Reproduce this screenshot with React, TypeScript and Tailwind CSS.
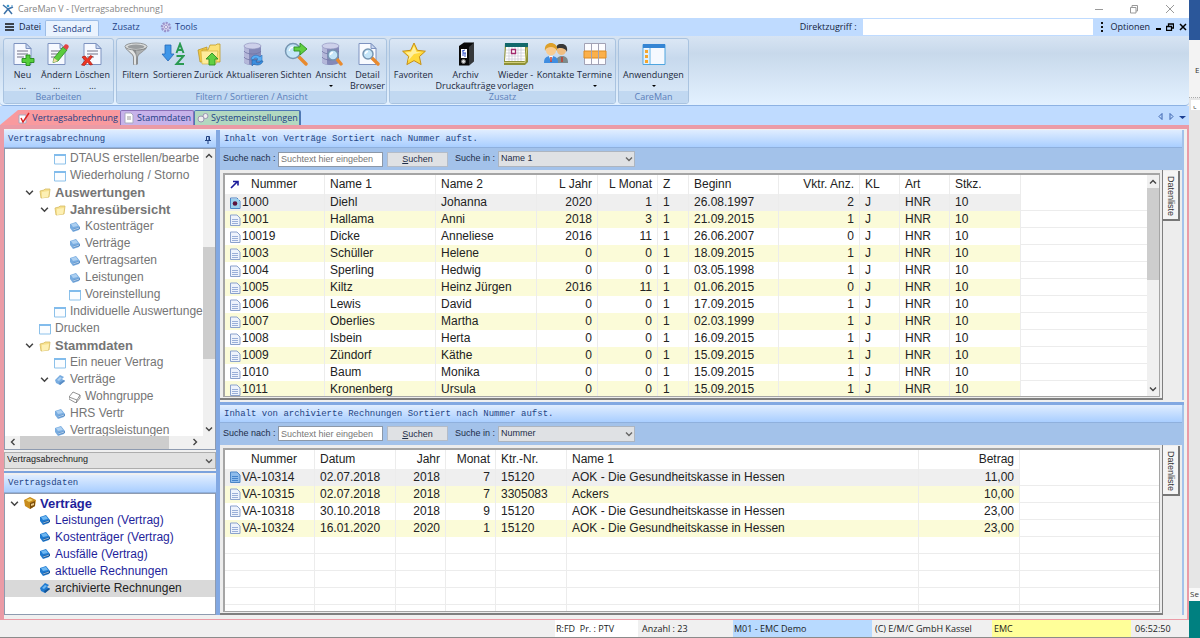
import type { ReactNode } from "react";

const uiFont = "font-['Open_Sans',sans-serif]";
const gridFont = "font-['Liberation_Sans',sans-serif]";

/* ---------- icons ---------- */

function Svg({ children, box = 24, className = "size-6" }: { children: ReactNode; box?: number; className?: string }) {
  return (
    <svg viewBox={`0 0 ${box} ${box}`} className={`${className} shrink-0`} fill="none" aria-hidden="true">
      {children}
    </svg>
  );
}

function Page() {
  return (
    <>
      <path d="M3 1.500h12l5 5v16h-17z" fill="#f6f9ff" stroke="#7e93c0" />
      <path d="M15 1.500v5h5z" fill="#c9d8f2" stroke="#7e93c0" />
      <path d="M6 9h11M6 12h11M6 15h7" stroke="#b4b5c2" strokeWidth="2" />
    </>
  );
}

function Drum() {
  return (
    <>
      <path d="M3 4v16c0 1.700 4 3 8.500 3s8.500-1.300 8.500-3v-16z" fill="#8489b8" />
      <path d="M3 4v16c0 1 1.500 1.900 5 2.500v-16z" fill="#b4b7d9" />
      <path d="M3 9c1 2 5 3 8.500 3s7.500-1 8.500-3M3 15c1 2 5 3 8.500 3s7.500-1 8.500-3" stroke="#7276a6" strokeWidth=".8" />
      <ellipse cx="11.500" cy="4" rx="8.500" ry="3" fill="#cdd0ea" stroke="#9396c0" strokeWidth=".7" />
    </>
  );
}

function Lens({ x, y, r }: { x: number; y: number; r: number }) {
  return (
    <>
      <path d={`M${x + r * 0.7} ${y + r * 0.7}L22 22`} stroke="#e88a2e" strokeWidth="3.400" strokeLinecap="round" />
      <circle cx={x} cy={y} r={r} fill="#c4e5f8" stroke="#7796b2" strokeWidth="1.500" />
      <path d={`M${x - r * 0.5} ${y}a${r * 0.5} ${r * 0.5} 0 0 1 ${r * 0.5} ${-r * 0.5}`} stroke="#fff" strokeWidth="1.300" />
    </>
  );
}

const icons: Record<string, ReactNode> = {
  new: (
    <Svg>
      <Page />
      <path d="M15 13h4v3.500h4v4h-4v3h-4v-3h-4v-4h4z" fill="#55cf3b" stroke="#258a1c" strokeWidth=".9" />
    </Svg>
  ),
  edit: (
    <Svg>
      <Page />
      <path d="M9 16l9-11 4 3-9 11-5 1.500z" fill="#5bcc3e" stroke="#2c8a1e" strokeWidth=".8" />
      <path d="M18 5l2-2.500c2-1 4.500 1 3.500 3l-1.500 2.500z" fill="#e34444" />
      <path d="M9 16l4 3-5 1.500z" fill="#f3d9a4" />
    </Svg>
  ),
  remove: (
    <Svg>
      <Page />
      <path d="M1 15l3-1 2.500 3 3-3.500 2 1-3 4 3 4-2.500.500-2.500-3-3 3.500-3-.500 3.500-4.500z" fill="#ee3524" stroke="#a81a10" strokeWidth=".7" />
    </Svg>
  ),
  filter: (
    <Svg>
      <path d="M1 5c1 4 7 6 8 10v7.500c1.500 1 4 .5 5-.5v-7c1-4 8-6 9-10z" fill="#8b8e90" />
      <path d="M2 6c2 3 7 5 8 9v7.500c1 .4 1.500.4 2 .2v-8c0-4-3-5-4-8z" fill="#e2e4e4" />
      <path d="M12 8c2 1 7 0 9-1-2 3-7 4-8 8v3z" fill="#aeb1b2" />
      <ellipse cx="12" cy="4.500" rx="11" ry="3.500" fill="#dcdede" stroke="#7d8081" strokeWidth=".8" />
      <ellipse cx="12" cy="4.800" rx="8.500" ry="2.200" fill="#9a9d9f" />
    </Svg>
  ),
  sort: (
    <Svg>
      <path d="M4 3h6v9h3l-6 7-6-7h3z" fill="#3f96e8" stroke="#2467b8" strokeWidth=".8" />
      <path d="M15.500 11l3.500-9 3.500 9M16.500 8h5" stroke="#2b9a52" strokeWidth="2" />
      <path d="M15.500 14h7l-7 8h7.500" stroke="#2b9a52" strokeWidth="2" />
    </Svg>
  ),
  back: (
    <Svg>
      <path d="M1 8l9-3v15h-7z" fill="#f0c945" stroke="#b98f1d" strokeWidth=".7" />
      <path d="M5 8h6l2-5h6l1-1h3v18h-16z" fill="#fbe17a" stroke="#c29c29" strokeWidth=".8" />
      <path d="M4 9h17l-2 13h-14z" fill="#fdec9b" stroke="#d2ac37" strokeWidth=".6" />
      <path d="M15 11l6 6h-3v6h-6v-6h-3z" fill="#60cf42" stroke="#2c8f22" strokeWidth=".9" />
    </Svg>
  ),
  refresh: (
    <Svg>
      <Drum />
      <path d="M10 17c1-4 6-5 9-2l2-2v6h-6l2-2c-2-2-4-1-5 1z" fill="#5aaef5" stroke="#2872bd" strokeWidth=".6" />
      <path d="M22 19c-1 4-6 5-9 3l-2 2v-6h5l-1 2c2 1 4 1 5-1z" fill="#3b8fe0" stroke="#2463a6" strokeWidth=".6" />
    </Svg>
  ),
  views: (
    <Svg>
      <Lens x={9} y={9} r={7.5} />
      <path d="M10 5h6v-4l7 6-7 6v-4h-6z" fill="#60cf42" stroke="#2c8f22" strokeWidth=".9" />
    </Svg>
  ),
  view: (
    <Svg>
      <Drum />
      <Lens x={14} y={13} r={5} />
    </Svg>
  ),
  detail: (
    <Svg>
      <path d="M3 1.500h12l5 5v16h-17z" fill="#f9fbff" stroke="#7e93c0" />
      <path d="M15 1.500v5h5z" fill="#c9d8f2" stroke="#7e93c0" />
      <Lens x={12} y={12} r={5} />
    </Svg>
  ),
  star: (
    <Svg>
      <path d="M12 1l3.400 7.300 8 .9-6 5.400 1.700 8-7.100-4-7.100 4 1.700-8-6-5.400 8-.9z" fill="#ffd93b" stroke="#c58f16" strokeLinejoin="round" />
      <path d="M12 4l2.500 6 5 .5-7.500 1.500-6 7 1.500-5-4-3.500 5.500-.6z" fill="#fff0a0" />
    </Svg>
  ),
  binder: (
    <Svg>
      <path d="M5 4l5-3.500h10l-1 19-4 4h-10z" fill="#090909" />
      <path d="M15 5l5-4.500v19l-5 4z" fill="#35383b" />
      <path d="M7 7h6v9h-6z" fill="#fff" />
      <path d="M8 9l3-1M9 9v5M9 11h3M11 11v4" stroke="#3454c8" />
      <circle cx="9.500" cy="19.500" r="2" fill="#ddd" stroke="#777" />
    </Svg>
  ),
  calendar: (
    <Svg>
      <path d="M1 1h23v19l-3 3h-21v-4z" fill="#8e9138" />
      <path d="M1 1h23v4h-23z" fill="#11686b" />
      <path d="M2 5h19v14h-20z" fill="#fff" />
      <path d="M2 8h19M2 11h19M2 14h19M2 17h19M5 5v14M8 5v14M11 5v14M14 5v14M17 5v14" stroke="#c6c7d4" strokeWidth=".7" />
      <path d="M7.500 7.500h4v4h-4z" fill="#fff" stroke="#a22a6c" strokeWidth="1.300" />
      <path d="M0 20.500h21l2-15" stroke="#d3cf7c" />
    </Svg>
  ),
  contacts: (
    <Svg>
      <path d="M12 21c0-5 2-7 6-7s6 2 6 7z" fill="#7d8b8c" />
      <circle cx="17.500" cy="8.500" r="4.500" fill="#efbd81" />
      <path d="M12 8c0-6 3-6 6-6s6 2 5 8c-1-3-4-4-6-4s-4 0-5 2z" fill="#383838" />
      <path d="M0 21c0-5 2-7 7-7s7 2 7 7z" fill="#3f8de0" />
      <path d="M5 14l2 6 2-6z" fill="#fff" />
      <circle cx="7" cy="8.500" r="5" fill="#f8cb90" />
      <path d="M1 9c-1-6 3-8 6-8s7 2 6 8c-2-3-3-4-6-4s-5 1-6 4z" fill="#dda02a" />
      <path d="M7 15v5M18 15v5" stroke="#c83a2a" strokeWidth="1.500" />
    </Svg>
  ),
  schedule: (
    <Svg>
      <path d="M1.500 1.500h21v21h-21z" fill="#fcfcff" stroke="#a2a2b5" />
      <path d="M1 9h22v7h-22z" fill="#fbb04a" stroke="#dc8b23" />
      <path d="M8.500 1v22M15.500 1v22" stroke="#a2a2b5" />
    </Svg>
  ),
  apps: (
    <Svg>
      <path d="M1 2.500h22v20h-22z" fill="#f5f9ff" stroke="#4fa5df" />
      <path d="M1 2h22v4h-22z" fill="#3585d4" />
      <path d="M2 7h5v15h-5z" fill="#dff0fc" />
      <path d="M3 8h3v3h-3zM3 13h3v3h-3zM3 18h3v3h-3z" fill="#f5a52c" />
      <path d="M8 6v16" stroke="#5db2e8" />
    </Svg>
  ),
};

function TreeIcon({ kind }: { kind: string }) {
  if (kind === "folder")
    return (
      <Svg box={12} className="size-3">
        <path d="M1 4l4-1 1-1h5l-1 8-8 1z" fill="#f7e08d" stroke="#d6bb62" strokeWidth=".8" />
        <path d="M3 5l7-1-1 6-6 1z" fill="#fdf0b4" />
      </Svg>
    );
  if (kind === "form")
    return (
      <Svg box={12} className="size-3">
        <path d="M.5 1.500h11v9.500h-11z" fill="#fbfdff" stroke="#8cc1ea" />
        <path d="M0 1h12v2h-12z" fill="#82bcec" />
      </Svg>
    );
  if (kind === "wire")
    return (
      <Svg box={12} className="size-3">
        <path d="M0 6l4-5 7 3-3 5zM0 6v2l7 4 4-5v-3M8 9l-1 3" stroke="#777" strokeWidth=".8" fill="#fff" />
      </Svg>
    );
  if (kind === "gold")
    return (
      <Svg box={12} className="size-3">
        <path d="M0 3l6-3 6 3-1 6-5 3-5-3z" fill="#c98d1c" />
        <path d="M2 3l4-1.500 3 1.500-4 2z" fill="#f4d46a" />
        <path d="M6 6l5-2v5l-5 3z" fill="#7c4e0b" />
        <path d="M7 7l3-1v2l-3 1z" fill="#e9c98a" />
      </Svg>
    );
  const strong = kind === "bookDark" || kind === "openDark";
  const main = strong ? "#1f7ad0" : "#78ace0";
  const dark = strong ? "#155393" : "#5a8dc4";
  const light = strong ? "#6fb8f2" : "#add0f1";
  if (kind === "open" || kind === "openDark")
    return (
      <Svg box={12} className="size-3">
        <path d="M1 6l5-5 4 2-2 2 3 2-5 4-4-2z" fill={main} />
        <path d="M3 6l3-3 2 1-3 3z" fill={light} />
        <path d="M5 9l5-3 1 1-5 4z" fill={dark} />
      </Svg>
    );
  return (
    <Svg box={12} className="size-3">
      <path d="M1 3l6-2 4 5-1 3-6 2-3-4z" fill={main} />
      <path d="M2 3l5-1 2 3-5 1z" fill={light} />
      <path d="M4 8l7-2v2l-7 2z" fill={dark} />
      <path d="M4 9l6-2" stroke="#e8f3fd" strokeWidth=".6" />
    </Svg>
  );
}

function Chevron({ turn = "", className = "size-2" }: { turn?: string; className?: string }) {
  return (
    <svg viewBox="0 0 8 8" className={`${className} ${turn} shrink-0`} fill="none" aria-hidden="true">
      <path d="M1 2.500l3 3 3-3" stroke="currentColor" strokeWidth="1.400" />
    </svg>
  );
}

function RowIcon({ kind }: { kind: string }) {
  return (
    <Svg box={12} className="size-3">
      <path d="M1.500 1h6.500l3 3v7.500h-9.500z" fill={kind === "blue" ? "#8ebcec" : "#eef3fc"} stroke={kind === "plain" ? "#8ba2cc" : "#4c86c6"} />
      {kind === "mark" ? (
        <>
          <path d="M2 2h8v9h-8z" fill="#9cd0ee" />
          <circle cx="6" cy="6.500" r="2.300" fill="#5c123c" />
        </>
      ) : (
        <path d="M3 5.500h6M3 7.500h6M3 9.500h6" stroke={kind === "blue" ? "#4584cc" : "#9aafd8"} />
      )}
    </Svg>
  );
}

/* ---------- ribbon ---------- */

type Tool = { icon: string; label: string; line2?: string; arrow?: boolean; width: string };

const groups: { title: string; width: string; tools: Tool[] }[] = [
  {
    title: "Bearbeiten",
    width: "w-[111px]",
    tools: [
      { icon: "new", label: "Neu", line2: "...", width: "w-[34px]" },
      { icon: "edit", label: "Ändern", line2: "...", width: "w-[34px]" },
      { icon: "remove", label: "Löschen", line2: "...", width: "w-[38px]" },
    ],
  },
  {
    title: "Filtern / Sortieren / Ansicht",
    width: "w-[271px]",
    tools: [
      { icon: "filter", label: "Filtern", width: "w-[34px]" },
      { icon: "sort", label: "Sortieren", width: "w-[40px]" },
      { icon: "back", label: "Zurück", width: "w-[32px]" },
      { icon: "refresh", label: "Aktualiseren", width: "w-[56px]" },
      { icon: "views", label: "Sichten", width: "w-[31px]" },
      { icon: "view", label: "Ansicht", arrow: true, width: "w-[39px]" },
      { icon: "detail", label: "Detail", line2: "Browser", width: "w-[34px]" },
    ],
  },
  {
    title: "Zusatz",
    width: "w-[227px]",
    tools: [
      { icon: "star", label: "Favoriten", width: "w-[44px]" },
      { icon: "binder", label: "Archiv", line2: "Druckaufträge", width: "w-[60px]" },
      { icon: "calendar", label: "Wieder -", line2: "vorlagen", width: "w-[40px]" },
      { icon: "contacts", label: "Kontakte", width: "w-[40px]" },
      { icon: "schedule", label: "Termine", arrow: true, width: "w-[38px]" },
    ],
  },
  {
    title: "CareMan",
    width: "w-[71px]",
    tools: [{ icon: "apps", label: "Anwendungen", arrow: true, width: "w-[67px]" }],
  },
];

function Ribbon() {
  return (
    <div className="flex h-[70px] shrink-0 gap-[2px] rounded-b border-b border-[#8db2e3] bg-linear-to-b from-[#d7e4f3] via-[#c8d9eb] via-25% to-[#e3f1ff] px-[3px] pt-[2px] pb-px">
      {groups.map((group) => (
        <section key={group.title} className={`${group.width} flex flex-col justify-between overflow-hidden rounded-[3px] border border-[#a9c3e0] bg-linear-to-b from-[#dbe7f5] via-[#c7d9ed] via-30% to-[#dcebfa]`}>
          <div className="flex h-[52px] justify-center pt-[3px]">
            {group.tools.map((tool) => (
              <button key={tool.label} type="button" className={`${tool.width} flex shrink-0 flex-col items-center whitespace-nowrap`}>
                {icons[tool.icon]}
                <span className="mt-[3px] text-[9px] leading-[11px] text-[#1c2a40]">{tool.label}</span>
                {tool.line2 && <span className="text-[9px] leading-[11px] text-[#1c2a40]">{tool.line2}</span>}
                {tool.arrow && <span className="mt-[5px] border-x-2 border-t-2 border-x-transparent border-t-black" />}
              </button>
            ))}
          </div>
          <h2 className="bg-[#c1d8f1] text-center text-[9px] leading-3 text-[#5b7fba]">{group.title}</h2>
        </section>
      ))}
    </div>
  );
}

function TitleBar() {
  return (
    <header className="flex h-[18px] shrink-0 items-center bg-white text-[#858585]">
      <Svg box={12} className="mx-[2px] size-3">
        <path d="M1 2l5 4-4 5M6 6l5-2M6 6l4 5" stroke="#3d72a8" strokeWidth="1.500" />
        <circle cx="6" cy="3" r="1.300" fill="#3d9bd0" />
        <circle cx="10" cy="3" r="1" fill="#8bb8dc" />
      </Svg>
      <h1 className="ml-[2px] text-[9px]">CareMan V - [Vertragsabrechnung]</h1>
      <div className="ml-auto flex items-center gap-[26px] pr-[14px]">
        <button type="button" aria-label="Minimieren" className="h-px w-[8px] bg-[#999]" />
        <button type="button" aria-label="Verkleinern">
          <Svg box={10} className="size-[10px]">
            <path d="M1.500 3.500h5.500v5.500h-5.500zM3 3v-1.500h5.500v5.500h-1.500" stroke="#999" />
          </Svg>
        </button>
        <button type="button" aria-label="Schließen">
          <Svg box={10} className="size-[10px]">
            <path d="M1 1l8 8M9 1l-8 8" stroke="#999" />
          </Svg>
        </button>
      </div>
    </header>
  );
}

function MenuBar() {
  return (
    <nav className="flex h-[18px] shrink-0 items-center bg-[#bfdbff] text-[9px] text-[#1c3f86]">
      <button type="button" className="flex w-[45px] items-center gap-[4px] pl-[5px] text-[#15233c]">
        <Svg box={10} className="size-[10px]">
          <path d="M0 2h9M0 5h9M0 8h9" stroke="#111" strokeWidth="1.500" />
        </Svg>
        Datei
      </button>
      <button type="button" className="mt-[2px] h-4 w-[54px] rounded-t-[2px] border border-b-0 border-[#9dbde6] bg-[#eaf3fe]">Standard</button>
      <button type="button" className="ml-[8px] w-[38px]">Zusatz</button>
      <button type="button" className="ml-[15px] flex items-center gap-[3px]">
        <Svg box={12} className="size-3">
          <circle cx="6" cy="6" r="4" fill="#d8d5ee" stroke="#9a94cc" strokeWidth="2.500" strokeDasharray="2 1" />
          <circle cx="6" cy="6" r="1.500" fill="#fff" stroke="#9a94cc" />
        </Svg>
        Tools
      </button>
      <label htmlFor="direct" className="ml-auto text-[#15233c]">Direktzugriff :</label>
      <input id="direct" className="ml-[6px] h-4 w-[230px] bg-white px-1 outline-none" />
      <button type="button" className="ml-[7px] flex items-center gap-[7px] text-[#15233c]">
        <Svg box={10} className="size-[10px] -mx-[3px]">
          <path d="M4 0h2v2h-2zM4 4h2v2h-2zM4 8h2v2h-2z" fill="#111" />
        </Svg>
        Optionen
      </button>
      <div className="mr-[2px] ml-[6px] flex items-center gap-[5px]">
        <button type="button" aria-label="Fenster minimieren" className="mt-[4px] h-[2px] w-[5px] bg-black" />
        <button type="button" aria-label="Fenster wiederherstellen">
          <Svg box={8} className="size-2">
            <path d="M.5 3.500h5v4h-5zM2.500 3v-2h5v4h-2" stroke="#000" strokeWidth="1.300" />
          </Svg>
        </button>
        <button type="button" aria-label="Fenster schließen">
          <Svg box={8} className="size-2">
            <path d="M1 1l6 6M7 1l-6 6" stroke="#000" strokeWidth="1.500" />
          </Svg>
        </button>
      </div>
    </nav>
  );
}

function DocumentTabs() {
  return (
    <div className="flex h-[19px] shrink-0 items-end bg-[#bfdbff] text-[9px] text-[#1c3f86]">
      <button type="button" className="flex h-[15px] w-[120px] items-center justify-end gap-[2px] bg-[#f99a9e] pr-[2px] whitespace-nowrap [clip-path:polygon(18px_0,100%_0,100%_100%,0_100%)]">
        <Svg box={12} className="size-3">
          <path d="M1 3h7v8h-7z" fill="#fff" stroke="#a9a9c0" />
          <path d="M3 6l2 4 6-9" stroke="#d92525" strokeWidth="1.500" />
        </Svg>
        Vertragsabrechnung
      </button>
      <button type="button" className="flex h-[15px] w-[74px] items-center gap-[2px] rounded-t-[2px] border border-b-0 border-[#8a70b8] bg-[#c6b2ea] pl-[2px]">
        <Svg box={12} className="size-3">
          <path d="M2 1h6l2 2v8h-8z" fill="#fff" stroke="#a9a9c0" />
          <path d="M4 5h4M4 7h4" stroke="#999" />
        </Svg>
        Stammdaten
      </button>
      <button type="button" className="flex h-[15px] w-[107px] items-center gap-[2px] rounded-t-[2px] border border-r-2 border-b-0 border-[#4e78b4] bg-[#b2d8c0] pl-[2px] whitespace-nowrap">
        <Svg box={12} className="size-3">
          <circle cx="4" cy="7" r="3" fill="#eee" stroke="#9a94b4" />
          <circle cx="8.500" cy="4" r="2.500" fill="#eee" stroke="#9a94b4" />
        </Svg>
        Systemeinstellungen
      </button>
      <div className="mb-[5px] ml-auto flex items-center gap-[4px] pr-[3px]">
        <button type="button" aria-label="Vorheriger Reiter">
          <Svg box={7} className="size-[7px]"><path d="M5 .5v6l-3-3z" stroke="#3a62ae" /></Svg>
        </button>
        <button type="button" aria-label="Nächster Reiter">
          <Svg box={7} className="size-[7px]"><path d="M2 .5v6l3-3z" stroke="#3a62ae" /></Svg>
        </button>
        <button type="button" aria-label="Alle Reiter">
          <Svg box={7} className="size-[7px]"><path d="M0 3h7l-3.500 3z" fill="#1b3f94" /></Svg>
        </button>
      </div>
    </div>
  );
}

/* ---------- left side ---------- */

type Node = { label: string; icon: string; level: number; open?: boolean; bold?: boolean; selected?: boolean };

const menuTree: Node[] = [
  { label: "DTAUS erstellen/bearbe", icon: "form", level: 3 },
  { label: "Wiederholung / Storno", icon: "form", level: 3 },
  { label: "Auswertungen", icon: "folder", level: 2, open: true, bold: true },
  { label: "Jahresübersicht", icon: "folder", level: 3, open: true, bold: true },
  { label: "Kostenträger", icon: "book", level: 4 },
  { label: "Verträge", icon: "book", level: 4 },
  { label: "Vertragsarten", icon: "book", level: 4 },
  { label: "Leistungen", icon: "book", level: 4 },
  { label: "Voreinstellung", icon: "form", level: 4 },
  { label: "Individuelle Auswertunge", icon: "form", level: 3 },
  { label: "Drucken", icon: "form", level: 2 },
  { label: "Stammdaten", icon: "folder", level: 2, open: true, bold: true },
  { label: "Ein neuer Vertrag", icon: "form", level: 3 },
  { label: "Verträge", icon: "open", level: 3, open: true },
  { label: "Wohngruppe", icon: "wire", level: 4 },
  { label: "HRS Vertr", icon: "book", level: 3 },
  { label: "Vertragsleistungen", icon: "book", level: 3 },
];

const dataTree: Node[] = [
  { label: "Verträge", icon: "gold", level: 1, open: true, bold: true },
  { label: "Leistungen (Vertrag)", icon: "bookDark", level: 2 },
  { label: "Kostenträger (Vertrag)", icon: "bookDark", level: 2 },
  { label: "Ausfälle (Vertrag)", icon: "bookDark", level: 2 },
  { label: "aktuelle Rechnungen", icon: "bookDark", level: 2 },
  { label: "archivierte Rechnungen", icon: "openDark", level: 2, selected: true },
];

const indents = ["", "pl-[4px]", "pl-[19px]", "pl-[34px]", "pl-[49px]"];

function Tree({ nodes, color }: { nodes: Node[]; color: string }) {
  return (
    <ul className={`${gridFont} ${color} min-w-0 flex-1 overflow-hidden pt-px text-[12px]`}>
      {nodes.map((node, i) => (
        <li key={i} className={node.selected ? "bg-[#d9d9d9] text-[#222]" : ""}>
          <button type="button" className={`${indents[node.level]} flex h-[17px] items-center whitespace-nowrap`}>
            <span className="w-[15px] text-[#444]">{node.open && <Chevron className="ml-[1px] size-[9px]" />}</span>
            <TreeIcon kind={node.icon} />
            <span className={`${node.bold ? "text-[13px] font-bold" : ""} ml-[4px] leading-[17px]`}>{node.label}</span>
          </button>
        </li>
      ))}
    </ul>
  );
}

function PaneHeader({ title, pin }: { title: string; pin?: boolean }) {
  return (
    <div className="flex h-[18px] shrink-0 items-center justify-between border-b border-[#8fb0dd] bg-linear-to-b from-[#e0edff] to-[#a9ceff] px-[4px] pt-[2px] font-['Liberation_Mono',monospace] text-[9px] text-[#1f4585]">
      <h2>{title}</h2>
      {pin && (
        <button type="button" aria-label="Anheften">
          <Svg box={8} className="size-2">
            <path d="M2.500 0.500h3v4h-3zM1 4.500h6M4 5v3M5 1v3" stroke="#1f3f80" />
          </Svg>
        </button>
      )}
    </div>
  );
}

function Sidebar() {
  return (
    <aside className="flex w-[212px] shrink-0 flex-col">
      <section className="flex min-h-0 flex-[340] flex-col">
        <PaneHeader title="Vertragsabrechnung" pin />
        <div className="flex min-h-0 flex-1 flex-col border border-[#8e9bb0] bg-white">
          <div className="flex min-h-0 flex-1">
            <Tree nodes={menuTree} color="text-[#757575]" />
            <div className="flex w-[12px] flex-col items-center justify-between bg-[#f0f0f0] py-[3px] text-[#444]">
              <Chevron turn="rotate-180" />
              <div className="mt-[87px] h-[112px] w-full bg-[#cdcdcd]" />
              <Chevron className="mt-auto size-2" />
            </div>
          </div>
          <div className="flex h-[13px] shrink-0 items-center bg-[#f0f0f0] px-[4px] text-[#444]">
            <Chevron turn="rotate-90" />
            <div className="ml-[3px] h-full w-[149px] bg-[#cdcdcd]" />
            <Chevron turn="-rotate-90" className="mr-[12px] ml-auto size-2" />
          </div>
        </div>
        <div className="relative mt-[2px] h-[17px] shrink-0">
          <select aria-label="Bereich" className={`${gridFont} block h-full w-full appearance-none border border-[#adadad] bg-[#e1e1e1] pl-[2px] text-[9px] text-[#222]`}>
            <option>Vertragsabrechnung</option>
          </select>
          <Chevron className="pointer-events-none absolute top-[5px] right-[3px] size-2 text-[#555]" />
        </div>
      </section>
      <div className="my-[2px] h-[2px] shrink-0 bg-[#7ba2dd]" />
      <section className="flex min-h-0 flex-[141] flex-col">
        <PaneHeader title="Vertragsdaten" />
        <div className="flex min-h-0 flex-1 border border-[#8e9bb0] bg-white">
          <Tree nodes={dataTree} color="text-[#1f1f9c]" />
        </div>
      </section>
    </aside>
  );
}

/* ---------- lists ---------- */

type Column = { title: string; width: string; right?: boolean };

const contractColumns: Column[] = [
  { title: "Nummer", width: "w-[100px]" },
  { title: "Name 1", width: "w-[111px]" },
  { title: "Name 2", width: "w-[101px]" },
  { title: "L Jahr", width: "w-[61px]", right: true },
  { title: "L Monat", width: "w-[60px]", right: true },
  { title: "Z", width: "w-[31px]" },
  { title: "Beginn", width: "w-[90px]" },
  { title: "Vktr. Anz.", width: "w-[81px]", right: true },
  { title: "KL", width: "w-[40px]" },
  { title: "Art", width: "w-[50px]" },
  { title: "Stkz.", width: "w-[71px]" },
];

const contracts = [
  ["1000", "Diehl", "Johanna", "2020", "1", "1", "26.08.1997", "2", "J", "HNR", "10"],
  ["1001", "Hallama", "Anni", "2018", "3", "1", "21.09.2015", "1", "J", "HNR", "10"],
  ["10019", "Dicke", "Anneliese", "2016", "11", "1", "26.06.2007", "0", "J", "HNR", "10"],
  ["1003", "Schüller", "Helene", "0", "0", "1", "18.09.2015", "1", "J", "HNR", "10"],
  ["1004", "Sperling", "Hedwig", "0", "0", "1", "03.05.1998", "1", "J", "HNR", "10"],
  ["1005", "Kiltz", "Heinz Jürgen", "2016", "11", "1", "01.06.2015", "0", "J", "HNR", "10"],
  ["1006", "Lewis", "David", "0", "0", "1", "17.09.2015", "1", "J", "HNR", "10"],
  ["1007", "Oberlies", "Martha", "0", "0", "1", "02.03.1999", "1", "J", "HNR", "10"],
  ["1008", "Isbein", "Herta", "0", "0", "1", "16.09.2015", "1", "J", "HNR", "10"],
  ["1009", "Zündorf", "Käthe", "0", "0", "1", "15.09.2015", "1", "J", "HNR", "10"],
  ["1010", "Baum", "Monika", "0", "0", "1", "15.09.2015", "1", "J", "HNR", "10"],
  ["1011", "Kronenberg", "Ursula", "0", "0", "1", "15.09.2015", "1", "J", "HNR", "10"],
];

const invoiceColumns: Column[] = [
  { title: "Nummer", width: "w-[90px]" },
  { title: "Datum", width: "w-[81px]" },
  { title: "Jahr", width: "w-[50px]", right: true },
  { title: "Monat", width: "w-[50px]", right: true },
  { title: "Ktr.-Nr.", width: "w-[71px]" },
  { title: "Name 1", width: "w-[352px]" },
  { title: "Betrag", width: "w-[101px]", right: true },
];

const invoices = [
  ["VA-10314", "02.07.2018", "2018", "7", "15120", "AOK - Die Gesundheitskasse in Hessen", "11,00"],
  ["VA-10315", "02.07.2018", "2018", "7", "3305083", "Ackers", "10,00"],
  ["VA-10318", "30.10.2018", "2018", "9", "15120", "AOK - Die Gesundheitskasse in Hessen", "23,00"],
  ["VA-10324", "16.01.2020", "2020", "1", "15120", "AOK - Die Gesundheitskasse in Hessen", "23,00"],
];

function DataTable({ columns, rows, blanks = 0, firstIcon, sortMark }: { columns: Column[]; rows: string[][]; blanks?: number; firstIcon: string; sortMark?: boolean }) {
  const line = "border-r border-[#ececec]";
  return (
    <table className={`${gridFont} w-full table-fixed border-separate border-spacing-0 text-[12px] text-[#222]`}>
      <thead>
        <tr className="h-[19px]">
          {columns.map((col, i) => (
            <th key={col.title} className={`${col.width} ${line} ${col.right ? "text-right" : "text-left"} px-[5px] py-0 leading-[19px] font-normal whitespace-nowrap`}>
              {i === 0 ? (
                <span className="flex items-center">
                  <span className="w-[21px]">
                    {sortMark && (
                      <Svg box={9} className="size-[9px]">
                        <path d="M1 8l6-6M3 1.500h5v4" stroke="#1b1b9a" strokeWidth="1.600" />
                      </Svg>
                    )}
                  </span>
                  {col.title}
                </span>
              ) : (
                col.title
              )}
            </th>
          ))}
          <th className="p-0" />
        </tr>
      </thead>
      <tbody>
        {rows.map((row, r) => {
          const fill = r === 0 ? "bg-[#efefef]" : r % 2 ? "bg-[#fbfbd8]" : "bg-white";
          return (
            <tr key={row[0]} className="h-[17px]">
              {row.map((cell, i) => (
                <td key={i} className={`${fill} ${line} ${columns[i].right ? "text-right" : ""} ${i === 0 ? "px-[4px]" : "px-[5px]"} py-0 leading-[17px] whitespace-nowrap`}>
                  {i === 0 ? (
                    <span className="flex items-center gap-[1px]">
                      <RowIcon kind={r === 0 ? firstIcon : "plain"} />
                      {cell}
                    </span>
                  ) : (
                    cell
                  )}
                </td>
              ))}
              <td className="border-b border-[#ececec] p-0" />
            </tr>
          );
        })}
        {Array.from({ length: blanks }, (_, r) => (
          <tr key={r} className="h-[17px]">
            {columns.map((col) => (
              <td key={col.title} className={`${line} border-b p-0`} />
            ))}
            <td className="border-b border-[#ececec] p-0" />
          </tr>
        ))}
      </tbody>
    </table>
  );
}

function SearchBar({ id, field }: { id: string; field: string }) {
  return (
    <form className={`${gridFont} flex h-[22px] shrink-0 items-center bg-[#a3c2ea] pl-[3px] text-[9px] text-[#1d2c48]`} onSubmit={(e) => e.preventDefault()}>
      <label htmlFor={`${id}-text`} className="w-[55px] whitespace-nowrap">Suche nach :</label>
      <input id={`${id}-text`} placeholder="Suchtext hier eingeben" className="h-[15px] w-[105px] border border-[#8c98a8] bg-white px-[2px] outline-none placeholder:text-[#777]" />
      <button type="submit" className="ml-[4px] h-[15px] w-[61px] border border-[#b4bcc8] bg-[#dfe1e4] leading-3">
        <span className="underline">S</span>uchen
      </button>
      <label htmlFor={`${id}-field`} className="ml-[7px] w-[43px] whitespace-nowrap">Suche in :</label>
      <span className="relative h-4 w-[137px]">
        <select id={`${id}-field`} className="block h-full w-full appearance-none border border-[#adb5c0] bg-[#dfe1e4] pl-[2px]">
          <option>{field}</option>
        </select>
        <Chevron className="pointer-events-none absolute top-[4px] right-[2px] size-2 text-[#666]" />
      </span>
    </form>
  );
}

function ListPane({ id, title, field, grow, scroll, children }: { id: string; title: string; field: string; grow: string; scroll?: boolean; children: ReactNode }) {
  return (
    <section className={`${grow} flex min-h-0 flex-col border-r-2 border-[#a3c2ea]`}>
      <PaneHeader title={title} />
      <SearchBar id={id} field={field} />
      <div className="flex min-h-0 flex-1 bg-[#ededed]">
        <div className="flex min-w-0 flex-1 border-r border-b-2 border-[#7f7f7f] pt-[3px] pr-[2px] pb-px pl-[3px]">
          <div className="flex min-w-0 flex-1 border-2 border-r border-b border-[#a5a5a5] bg-white">
            <div className="min-w-0 flex-1 overflow-hidden">{children}</div>
            {scroll && (
              <div className="flex w-[12px] flex-col items-center justify-between bg-[#f0f0f0] py-[3px] text-[#444]">
                <Chevron turn="rotate-180" />
                <div className="mt-[2px] h-[92px] w-full bg-[#cdcdcd]" />
                <Chevron className="mt-auto size-2" />
              </div>
            )}
          </div>
        </div>
        <div className="w-[19px] shrink-0 pt-px pr-[2px]">
          <button type="button" className={`${gridFont} h-[50px] w-full border-r-2 border-b-2 border-[#777] bg-[#f5f5f5] pt-[3px] text-[9px] leading-3 text-[#333] [writing-mode:vertical-rl]`}>Datenliste</button>
        </div>
      </div>
    </section>
  );
}

function StatusBar() {
  return (
    <footer className="flex h-[18px] shrink-0 justify-end border-b border-[#8b8b8b] bg-[#f0f0f0] text-[9px] leading-[17px] whitespace-pre text-[#1c1c1c]">
      <span className="w-[83px] bg-white pl-[1px]">R:FD  Pr. : PTV</span>
      <span className="w-[95px] pl-[4px]">Anzahl : 23</span>
      <span className="w-[139px] bg-[#b8daff] pl-[1px]">M01 - EMC Demo</span>
      <span className="w-[120px] pl-[3px]">(C) E/M/C GmbH Kassel</span>
      <span className="w-[139px] bg-[#ffff99] pl-[2px]">EMC</span>
      <span className="w-[58px] pl-[4px]">06:52:50</span>
    </footer>
  );
}

export default function App() {
  return (
    <div className={`${uiFont} flex h-screen overflow-hidden bg-[#f0f0f0]`}>
      <main className="flex min-w-0 flex-1 flex-col">
        <TitleBar />
        <MenuBar />
        <Ribbon />
        <DocumentTabs />
        <div className="flex min-h-0 flex-1 border-t-4 border-r-2 border-b border-l-4 border-[#eb9ba6] pt-px pr-[3px] pb-[4px]">
          <Sidebar />
          <div className="w-[4px] shrink-0 bg-[#82a8e2]" />
          <div className="flex min-w-0 flex-1 flex-col">
            <ListPane id="contracts" title="Inhalt von Verträge Sortiert nach Nummer aufst." field="Name 1" grow="flex-[271]" scroll>
              <DataTable columns={contractColumns} rows={contracts} firstIcon="mark" sortMark />
            </ListPane>
            <div className="mt-[2px] h-[3px] shrink-0 bg-[#82a8e2]" />
            <ListPane id="invoices" title="Inhalt von archivierte Rechnungen Sortiert nach Nummer aufst." field="Nummer" grow="flex-[211]">
              <DataTable columns={invoiceColumns} rows={invoices} blanks={6} firstIcon="blue" />
            </ListPane>
          </div>
        </div>
        <StatusBar />
      </main>
      <aside className="flex w-[11px] shrink-0 flex-col overflow-hidden bg-[#e6e6e6] text-[8px] text-[#333]">
        <div className="h-[40px] bg-[#2b579a]" />
        <div className="h-[58px] border-b border-dotted border-[#aaa] bg-[#f3f3f3] pt-[24px] pl-[6px]">E</div>
        <div className="mt-[2px] ml-[2px] h-[10px] bg-white pl-[2px] leading-[9px]">⌞</div>
        <div className="mt-auto h-[13px] bg-[#f8f8f8] pl-px leading-3">Se</div>
        <div className="h-[37px] bg-[#008080]" />
      </aside>
    </div>
  );
}
